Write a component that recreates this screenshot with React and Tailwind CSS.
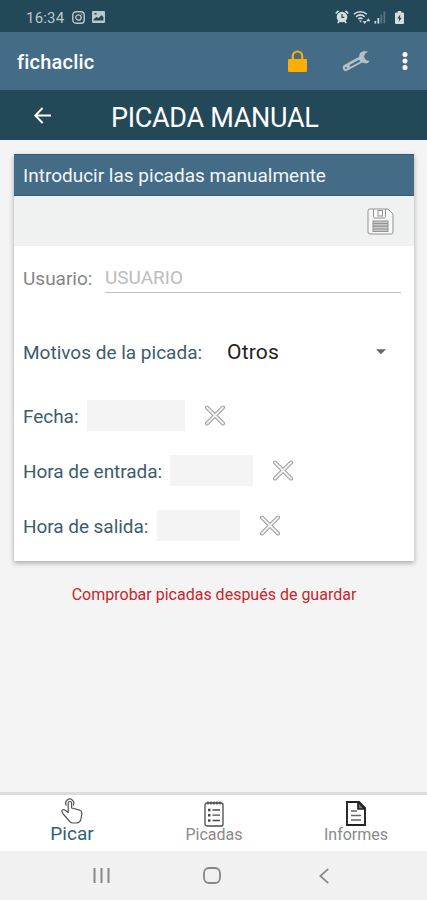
function StatusBar() {
  return (
    <div className="flex h-8 items-center bg-[#234858] pl-[26px] pr-[23px] pt-[2px] text-[#b9c7cf]">
      <span className="w-[46px] pt-[1px] text-[15px] leading-4 tracking-[0.2px]">16:34</span>
      <svg className="h-[13px] w-[13px]" viewBox="0 0 13 13" fill="none" stroke="currentColor">
        <rect x="0.8" y="0.8" width="11.4" height="11.4" rx="3.2" strokeWidth="1.4" />
        <circle cx="6.5" cy="6.5" r="2.7" strokeWidth="1.3" />
        <circle cx="9.8" cy="3.2" r="0.5" strokeWidth="0.5" />
      </svg>
      <svg className="ml-[7px] h-[12px] w-[13px]" viewBox="0 0 13 12">
        <path
          fill="currentColor"
          fillRule="evenodd"
          d="M1 0h11a1 1 0 0 1 1 1v10a1 1 0 0 1-1 1H1a1 1 0 0 1-1-1V1a1 1 0 0 1 1-1ZM1.600 8.200V9.500h9.800V6L9.300 4.300 6.700 7 4.500 6ZM2.500 2v1.600h2V2Z"
        />
      </svg>

      <div className="ml-auto flex items-center text-[#d5dde1]">
        <svg className="h-[14px] w-[14px]" viewBox="0 0 14 14">
          <path d="M.7 3.500 3.500.9M13.300 3.500 10.500.9M2.800 13l1.600-2M11.200 13l-1.600-2" stroke="currentColor" strokeWidth="1.700" />
          <circle cx="7" cy="7" r="5.300" fill="currentColor" />
          <path d="M7 4v3.300h2.300" fill="none" stroke="#234858" strokeWidth="1.200" />
        </svg>
        <svg className="ml-[4px] h-[15px] w-[18px]" viewBox="0 0 18 15" fill="none" stroke="currentColor">
          <path d="M.8 4.200c3.800-3.400 9.300-3.400 13.100 0M3 6.800c2.600-2.300 6.100-2.300 8.700 0M5.200 9c1.400-1.100 3-1.100 4.300 0" strokeWidth="1.500" />
          <path d="M6 10.500h3l-1.500 2Z" fill="currentColor" stroke="none" />
          <path d="m10.200 11.500 1.500 2 1.500-2ZM13.800 11l1.500-2.300 1.500 2.300Z" fill="currentColor" strokeWidth="0.700" />
        </svg>
        <svg className="ml-[3px] h-[13px] w-[12px]" viewBox="0 0 12 13" fill="currentColor">
          <path d="M.5 10h1.700v2.500H.5zM3.500 7h1.700v5.500H3.500z" />
          <path d="M6.500 3.500h1.700v9H6.500zM9.500.5h1.700v12H9.500z" opacity="0.300" />
        </svg>
        <svg className="ml-[9px] h-[13px] w-[9px]" viewBox="0 0 9 13">
          <path d="M2.800 0h3.400v1.600h1.600q1.200 0 1.200 1.200V12q0 1-1 1H1q-1 0-1-1V2.800q0-1.200 1.200-1.200h1.600Z" fill="currentColor" />
          <path d="M5.300 3.500 2.300 7.500h1.900L3.700 11l3-4.200H4.900Z" fill="#234858" />
        </svg>
      </div>
    </div>
  );
}

function AppBar() {
  return (
    <div className="flex h-[58px] items-center bg-[#456c86] pl-[17px] pr-[19px]">
      <h1 className="pt-[2px] text-[20px] font-medium leading-6 tracking-[0.2px] text-white">fichaclic</h1>
      <svg className="ml-auto h-[22px] w-[19px]" viewBox="0 0 19 22">
        <path d="M4.800 10V6.200a4.700 4.700 0 0 1 9.400 0V10" fill="none" stroke="#f9ae08" strokeWidth="2.200" />
        <rect x="0" y="9" width="19" height="13" rx="1" fill="#f9ae08" />
      </svg>
      <svg className="ml-[35px] h-[22px] w-[28px]" viewBox="0 0 28 22">
        <path
          d="M27 1.800C22.500-.5 16.300 1.200 17 6.500L1.800 14.800C-1 17 .700 22.500 4.800 21.300L20.600 12.700C23.500 15 27.600 13.500 27.700 10.600L24 9.800 22.300 6.800 23.700 3.500Z"
          fill="#b3c0cc"
          stroke="#40586a"
          strokeWidth="0.600"
          strokeLinejoin="round"
        />
        <path d="m8.500 15.600 8.500-4.600" stroke="#456c86" strokeWidth="2" strokeLinecap="round" />
        <circle cx="4" cy="18" r="1" fill="#456c86" />
      </svg>
      <svg className="ml-[32px] h-[20px] w-[6px]" viewBox="0 0 6 20" fill="#fff">
        <circle cx="3" cy="3.500" r="2.500" />
        <circle cx="3" cy="10" r="2.500" />
        <circle cx="3" cy="16.500" r="2.500" />
      </svg>
    </div>
  );
}

function TitleBar() {
  return (
    <div className="flex h-[50px] items-center bg-[#234858] pl-[34px] text-white">
      <svg className="h-[17px] w-[18px]" viewBox="0 0 18 17" fill="none" stroke="currentColor" strokeWidth="1.900">
        <path d="M17 8.500H1.600M8.600 1 1.300 8.500 8.600 16" />
      </svg>
      <h2 className="ml-[59px] pt-[6px] text-[27px] leading-8 tracking-[-0.3px]">PICADA MANUAL</h2>
    </div>
  );
}

function SaveIcon() {
  return (
    <svg className="h-[27px] w-[27px]" viewBox="0 0 27 27" fill="none" stroke="#929292">
      <path d="M3 1h18l5 5v18q0 2-2 2H3q-2 0-2-2V3q0-2 2-2Z" fill="#f8f8f8" />
      <path d="M6.500 1v7.500q0 1.500 1.500 1.500h9q1.500 0 1.500-1.500V1" />
      <rect x="11" y="2.500" width="4.500" height="5.500" />
      <rect x="6" y="13" width="15" height="10.500" fill="#c9c9c9" />
      <path d="M6 15.500h15M6 18.200h15M6 21h15" strokeWidth="1.200" />
    </svg>
  );
}

function ClearIcon() {
  return (
    <svg className="h-[22px] w-[22px]" viewBox="0 0 22 22" strokeLinecap="round">
      <path d="m3 2.500 16 16M19 2.500l-16 16" stroke="#a0a0a0" strokeWidth="4" />
      <path d="m3 2.500 16 16M19 2.500l-16 16" stroke="#f3f3f3" strokeWidth="1.900" />
    </svg>
  );
}

function PickerRow({ label, labelClass, boxClass }) {
  return (
    <div className="flex h-[55px] items-center text-[#3d5c6a]">
      <span className={`${labelClass} whitespace-nowrap pt-[2px] text-[19px] leading-6 tracking-[-0.05px]`}>{label}</span>
      <div className={`${boxClass} h-[31px] bg-[#f4f4f4]`} />
      <div className="ml-[19px]">
        <ClearIcon />
      </div>
    </div>
  );
}

function FormCard() {
  return (
    <section className="ml-[14px] mr-[13px] mt-[14px] h-[407px] bg-white shadow-[0_2px_5px_rgba(0,0,0,0.32)]">
      <div className="flex h-[42px] items-center border-y border-[#315d7b] bg-[#456c86] pl-[9px] pt-[3px] text-[19px] text-[#f3f6f8]">
        Introducir las picadas manualmente
      </div>
      <div className="flex h-[50px] items-center justify-end bg-[#eff2f0] pr-[20px]">
        <SaveIcon />
      </div>
      <div className="pl-[9px]">
        <div className="flex h-[64px] items-center">
          <span className="w-[82px] pt-[2px] text-[19px] text-[#858585]">Usuario:</span>
          <div className="flex h-[29px] w-[296px] items-center border-b border-[#c2c2c2] pt-[2px] text-[19px] text-[#bcbcbc]">
            USUARIO
          </div>
        </div>
        <div className="flex h-[84px] items-center">
          <span className="w-[204px] whitespace-nowrap pt-[2px] text-[19px] text-[#3d5c6a]">Motivos de la picada:</span>
          <span className="pt-[1px] text-[21px] tracking-[0.2px] text-[#222]">Otros</span>
          <svg className="ml-auto mr-[28px] h-[6px] w-[10px]" viewBox="0 0 11 6">
            <path d="M0 0h11L5.500 5.500Z" fill="#666" />
          </svg>
        </div>
        <div className="-mt-[6px]">
          <PickerRow label="Fecha:" labelClass="w-[64px]" boxClass="w-[98px]" />
          <PickerRow label="Hora de entrada:" labelClass="w-[147px]" boxClass="w-[83px]" />
          <PickerRow label="Hora de salida:" labelClass="w-[134px]" boxClass="w-[83px]" />
        </div>
      </div>
    </section>
  );
}

function HandIcon() {
  return (
    <svg className="h-[26px] w-[22px]" viewBox="0 0 22 26" fill="none" stroke="#555" strokeWidth="1.200" strokeLinejoin="round">
      <path d="M5.500 7.500a4 4 0 1 1 6.500 0" />
      <path d="M7.200 14.500V5.200q0-1.700 1.700-1.700t1.700 1.700v4.800l8.200 2.200q2.200.7 2.100 3l-.7 5q-.8 4.800-5 4.800h-3q-2 0-3.500-1.500L1.800 15.500q-1.500-2.500-.3-3.500 1.200-.8 3 .5Z" fill="#fff" />
    </svg>
  );
}

function ListIcon() {
  return (
    <svg className="h-[26px] w-[20px]" viewBox="0 0 20 26" fill="none" stroke="#4a4a4a">
      <rect x="1" y="2" width="18" height="23" rx="2" strokeWidth="1.300" />
      <path d="M4 .5v3M7 .5v3M10 .5v3M13 .5v3M16 .5v3" strokeWidth="1.400" />
      <path d="M4 9h2.500M4 14.200h2.500M4 19.500h2.500" strokeWidth="2.500" />
      <path d="M8.500 9H16M8.500 14.200H16M8.500 19.500H16" strokeWidth="1.300" />
    </svg>
  );
}

function DocumentIcon() {
  return (
    <svg className="h-[25px] w-[20px]" viewBox="0 0 20 25" fill="none" stroke="#222">
      <path d="M1 1h12l6 6v17H1Z" strokeWidth="1.900" />
      <path d="M12 1v7h7Z" fill="#777" strokeWidth="1.700" />
      <path d="M5 10h6M5 14.500h10M5 19h10" stroke="#666" strokeWidth="1.300" />
    </svg>
  );
}

function BottomNav() {
  return (
    <nav className="grid h-[59px] grid-cols-3 border-t-[3px] border-[#dcdcdc] bg-white pl-[1px] text-[16px] text-[#898989]">
      <div className="flex flex-col items-center pt-[3px] text-[19px] text-[#326078]">
        <HandIcon />
        <span className="-mt-[2px] leading-6">Picar</span>
      </div>
      <div className="flex flex-col items-center pt-[6px]">
        <ListIcon />
        <span className="-mt-[4px] leading-6">Picadas</span>
      </div>
      <div className="flex flex-col items-center pt-[6px]">
        <DocumentIcon />
        <span className="-mt-[3px] leading-6">Informes</span>
      </div>
    </nav>
  );
}

function SystemNav() {
  return (
    <div className="flex h-[49px] items-center bg-[#f1f1f1] pl-[93px] text-[#878787]">
      <svg className="h-[15px] w-[17px]" viewBox="0 0 17 15" stroke="currentColor" strokeWidth="2">
        <path d="M1.500 0v15M8.500 0v15M15.500 0v15" />
      </svg>
      <svg className="ml-[93px] h-[17px] w-[18px]" viewBox="0 0 18 17" fill="none" stroke="currentColor" strokeWidth="1.800">
        <rect x="1" y="1" width="16" height="15" rx="5" />
      </svg>
      <svg className="ml-[98px] h-[16px] w-[10px]" viewBox="0 0 10 16" fill="none" stroke="currentColor" strokeWidth="1.700">
        <path d="M9.300.8 1.300 8l8 7.200" />
      </svg>
    </div>
  );
}

export default function App() {
  return (
    <div className="flex h-[900px] w-[427px] flex-col overflow-hidden bg-[#f4f4f4] font-[Roboto,sans-serif]">
      <StatusBar />
      <AppBar />
      <TitleBar />
      <FormCard />
      <p className="mt-[22px] pl-[1px] text-center text-[16px] leading-6 text-[#c9252b]">Comprobar picadas después de guardar</p>
      <div className="mt-auto">
        <BottomNav />
        <SystemNav />
      </div>
    </div>
  );
}
